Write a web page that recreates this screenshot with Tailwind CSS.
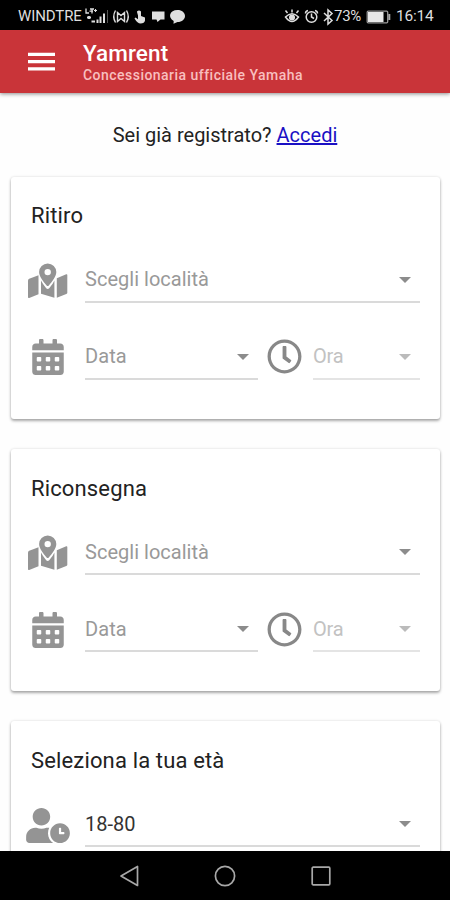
<!DOCTYPE html>
<html lang="it">
<head>
<meta charset="utf-8">
<title>Yamrent</title>
<script src="https://cdn.jsdelivr.net/npm/@tailwindcss/browser@4"></script>
</head>
<body class="font-['Roboto',sans-serif] bg-[#fefefe]">
<svg class="hidden">
  <symbol id="map" viewBox="0 0 40 36">
    <path d="M0 17.500Q0 16.200 1.200 15.700L10.500 12.300V31.200L1.200 34.900Q0 35.300 0 34.200Z"/>
    <path d="M13 17.500Q15 21.500 18.200 25.200Q19.700 26.600 21.200 25.200Q25 21 26.400 17.500V34.800L13 30.800Z"/>
    <path d="M28.800 15.200 38.200 11.300Q39.300 11 39.300 12V29.500Q39.300 30.500 38.300 31L28.800 34.800Z"/>
    <path fill-rule="evenodd" d="M19.700 0.500A8.600 8.600 0 0 0 11.100 9.100C11.100 13.500 15.500 19 18.600 22.500Q19.700 23.600 20.800 22.500C24 19 28.300 13.500 28.300 9.100A8.600 8.600 0 0 0 19.700 .5ZM19.700 5.900A3.200 3.200 0 1 1 19.700 12.300A3.200 3.200 0 0 1 19.700 5.900Z"/>
  </symbol>
  <symbol id="calendar" viewBox="0 0 448 512">
    <path d="M0 464c0 26.500 21.500 48 48 48h352c26.500 0 48-21.500 48-48V192H0v272zm320-196c0-6.600 5.400-12 12-12h40c6.600 0 12 5.400 12 12v40c0 6.600-5.400 12-12 12h-40c-6.600 0-12-5.400-12-12v-40zm0 128c0-6.600 5.400-12 12-12h40c6.600 0 12 5.400 12 12v40c0 6.600-5.400 12-12 12h-40c-6.600 0-12-5.400-12-12v-40zM192 268c0-6.600 5.400-12 12-12h40c6.600 0 12 5.400 12 12v40c0 6.600-5.400 12-12 12h-40c-6.600 0-12-5.400-12-12v-40zm0 128c0-6.600 5.400-12 12-12h40c6.600 0 12 5.400 12 12v40c0 6.600-5.400 12-12 12h-40c-6.600 0-12-5.400-12-12v-40zM64 268c0-6.600 5.400-12 12-12h40c6.600 0 12 5.400 12 12v40c0 6.600-5.400 12-12 12H76c-6.600 0-12-5.400-12-12v-40zm0 128c0-6.600 5.400-12 12-12h40c6.600 0 12 5.400 12 12v40c0 6.600-5.400 12-12 12H76c-6.600 0-12-5.400-12-12v-40zM400 64h-48V16c0-8.800-7.200-16-16-16h-32c-8.800 0-16 7.200-16 16v48H160V16c0-8.800-7.200-16-16-16h-32c-8.800 0-16 7.200-16 16v48H48C21.500 64 0 85.500 0 112v48h448v-48c0-26.500-21.500-48-48-48z"/>
  </symbol>
  <symbol id="clock" viewBox="0 0 512 512">
    <path d="M256 8C119 8 8 119 8 256s111 248 248 248 248-111 248-248S393 8 256 8zm0 448c-110.500 0-200-89.500-200-200S145.500 56 256 56s200 89.500 200 200-89.500 200-200 200zm61.800-104.400l-84.900-61.700c-3.100-2.300-4.900-5.900-4.900-9.700V116c0-6.600 5.400-12 12-12h32c6.600 0 12 5.400 12 12v141.700l66.800 48.600c5.400 3.900 6.500 11.400 2.600 16.800L334.600 349c-3.900 5.300-11.400 6.500-16.800 2.600z"/>
  </symbol>
  <symbol id="userclock" viewBox="0 0 640 512">
    <path d="M496 224c-79.600 0-144 64.400-144 144s64.400 144 144 144 144-64.400 144-144-64.400-144-144-144zm64 150.300c0 5.300-4.400 9.700-9.700 9.700h-60.600c-5.300 0-9.700-4.400-9.700-9.700v-76.600c0-5.300 4.400-9.700 9.700-9.700h12.600c5.300 0 9.700 4.400 9.700 9.700V352h38.300c5.300 0 9.700 4.400 9.700 9.700v12.600zM320 368c0-27.800 6.700-54.100 18.200-77.500-8-1.500-16.200-2.500-24.600-2.500h-16.700c-22.200 10.200-46.900 16-72.900 16s-50.600-5.800-72.900-16h-16.700C60.200 288 0 348.200 0 422.400V464c0 26.500 21.500 48 48 48h347.100c-45.300-31.900-75.100-84.500-75.100-144zm-96-112c70.700 0 128-57.300 128-128S294.700 0 224 0 96 57.300 96 128s57.300 128 128 128z"/>
  </symbol>
</svg>
<div class="w-[450px] h-[900px] flex flex-col overflow-hidden">
  <div class="h-[30px] shrink-0 bg-black text-[#dedede] flex items-center pl-[18px] pr-[17px] pt-[3px] relative z-20">
    <span class="text-[15px] tracking-[-0.1px] w-[66px] whitespace-nowrap">WINDTRE</span>
    <svg class="w-[26px] h-[20px]" viewBox="84 6 26 20" fill="none" stroke="#dedede">
      <path d="M86 7.500V12H89M90 8H94M92 8V12.500M89.500 10.200H93" stroke-width="1.300"/><path d="M95.500 8V11M94 9.500H97" stroke-width="1.100"/>
      <path d="M87 16.500H91M89 15V18M91.500 20.500H95" stroke-width="1.800"/>
      <path d="M97.500 22V18.500M100.500 22V15.500M104 22V12.500" stroke-width="2"/><path d="M107.500 22V9" stroke="#555" stroke-width="1"/>
    </svg>
    <svg class="w-[76px] h-[20px] ml-[1px]" viewBox="111 6 76 20">
      <g fill="none" stroke="#dedede" stroke-width="1.400"><path d="M115.500 9.500Q112 15.500 115.500 21.500M126.500 9.500Q130 15.500 126.500 21.500M117.500 20.500V11.500L121 14.500L124.500 11.500V20.500L121 17.500Z"/></g>
      <g fill="#dedede"><path d="M137 14.500V10.500Q139 8.500 141 10.500V15L145 16.500V19.500Q144.500 22.500 140.500 22.500Q137.500 22.500 134.500 17.500L135.500 16.500L138 18.200V11Z"/><path d="M152 10.500H164.500V18.500H160.500L157.500 21L156.500 18.500H152Z"/><path d="M177.500 9C182 9 185 11.700 185 15S182 21 177.500 21L173.500 22.800L173.700 20C167.500 16.500 169.500 9 177.500 9Z"/></g>
    </svg>
    <svg class="w-[50px] h-[22px] ml-auto" viewBox="284 5 50 22" fill="none" stroke="#dedede" stroke-width="1.500">
      <path d="M285.500 16Q292 9.500 298.500 16Q292 25 285.500 16ZM287.500 12L285.500 9.500M292 11.500V8.500M296.500 12L298.500 9.500"/><circle cx="292" cy="16.500" r="2.300" fill="#dedede"/>
      <circle cx="311.500" cy="16" r="5.300"/><path d="M311.500 12.500V16L314 17.500M305.500 12.500Q305.500 10 308 9.500M317.500 12.500Q317.500 10 315 9.500"/>
      <path d="M324 12L332 19.500L328 23V9L332 12.500L324 20"/>
    </svg>
    <span class="text-[15px] w-[32px] whitespace-nowrap tracking-[-0.3px]">73%</span>
    <svg class="w-[25px] h-[14px]" viewBox="0 0 25 14"><rect x="1.200" y="1.200" width="20.500" height="11.600" rx="1" fill="none" stroke="#999" stroke-width="1.300"/><rect x="2" y="2" width="15.500" height="10" fill="#e8e8e8"/><path d="M23.300 4V10" stroke="#aaa" stroke-width="2"/></svg>
    <span class="text-[15.500px] ml-[5px] w-[37px] whitespace-nowrap tracking-[-0.200px]">16:14</span>
  </div>
  <header class="h-[63px] shrink-0 bg-[#c93439] flex items-start relative z-10 shadow-[0_1px_4px_rgba(0,0,0,0.45)]">
    <svg class="w-[27px] h-[19px] ml-[28px] mt-[22px]" viewBox="0 0 27 19" fill="#fff"><path d="M0 .7H27V4H0ZM0 8H27V11.300H0ZM0 15.300H27V18.600H0Z"/></svg>
    <div class="ml-[28px] pt-[10px]">
      <h1 class="text-[22.500px] leading-[26px] tracking-[0.1px] font-medium text-white">Yamrent</h1>
      <p class="text-[14px] leading-[18px] tracking-[0.47px] whitespace-nowrap text-[#f8bfbf] font-medium">Concessionaria ufficiale Yamaha</p>
    </div>
  </header>
  <main class="h-[758px] shrink-0 overflow-hidden px-[11px] flex flex-col">
    <p class="h-[84px] shrink-0 pt-[30px] text-center text-[20px] leading-[24px] text-[#222]"><span>Sei già registrato?</span> <a class="underline text-[#1a10c4]">Accedi</a></p>
    <div class="flex flex-col gap-[30px]">
      <section class="h-[242px] w-[429px] rounded-[3px] bg-white shadow-[0_2px_3px_rgba(0,0,0,0.32),0_0_3px_rgba(0,0,0,0.12)] pl-[17px] pr-[20px] pt-[26px]">
        <h2 class="pl-[3px] text-[22px] leading-[26px] tracking-[0.15px] text-[#222]">Ritiro</h2>
        <div class="flex mt-[24px] h-[50px] items-center">
          <svg class="w-[40px] h-[36px] mt-[5px] text-[#949494] fill-current"><use href="#map"/></svg>
          <div class="ml-[17px] w-[335px] h-[50px] border-b-2 border-[#dadada] flex items-center justify-between pr-[9px] pt-[4px]"><span class="text-[20px] tracking-[0.02px] text-[#999]">Scegli località</span><svg class="w-[12px] h-[6px] mt-[2px]" viewBox="0 0 12 6" fill="#8c8c8c"><path d="M0 0H12L6 6Z"/></svg></div>
        </div>
        <div class="flex mt-[27px] h-[50px] items-center">
          <svg class="w-[32px] h-[36px] ml-[4px] mt-[4px] text-[#949494] fill-current"><use href="#calendar"/></svg>
          <div class="ml-[21px] w-[173px] h-[50px] border-b-2 border-[#dadada] flex items-center justify-between pr-[9px] pt-[4px]"><span class="text-[20px] tracking-[0.1px] text-[#999]">Data</span><svg class="w-[12px] h-[6px] mt-[1px]" viewBox="0 0 12 6" fill="#8c8c8c"><path d="M0 0H12L6 6Z"/></svg></div>
          <svg class="w-[35px] h-[35px] ml-[9px] mt-[3px] text-[#888] fill-current"><use href="#clock"/></svg>
          <div class="ml-[11px] w-[107px] h-[50px] border-b-2 border-[#e4e4e4] flex items-center justify-between pr-[9px] pt-[4px]"><span class="text-[20px] tracking-[-0.2px] text-[#c2c2c2]">Ora</span><svg class="w-[12px] h-[6px] mt-[1px]" viewBox="0 0 12 6" fill="#bbb"><path d="M0 0H12L6 6Z"/></svg></div>
        </div>
      </section>
      <section class="h-[242px] w-[429px] rounded-[3px] bg-white shadow-[0_2px_3px_rgba(0,0,0,0.32),0_0_3px_rgba(0,0,0,0.12)] pl-[17px] pr-[20px] pt-[27px]">
        <h2 class="pl-[3px] text-[22px] leading-[26px] tracking-[0.15px] text-[#222]">Riconsegna</h2>
        <div class="flex mt-[23px] h-[50px] items-center">
          <svg class="w-[40px] h-[36px] mt-[6px] text-[#949494] fill-current"><use href="#map"/></svg>
          <div class="ml-[17px] w-[335px] h-[50px] border-b-2 border-[#dadada] flex items-center justify-between pr-[9px] pt-[5px]"><span class="text-[20px] tracking-[0.02px] text-[#999]">Scegli località</span><svg class="w-[12px] h-[6px] mt-[1px]" viewBox="0 0 12 6" fill="#8c8c8c"><path d="M0 0H12L6 6Z"/></svg></div>
        </div>
        <div class="flex mt-[27px] h-[50px] items-center">
          <svg class="w-[32px] h-[36px] ml-[4px] mt-[5px] text-[#949494] fill-current"><use href="#calendar"/></svg>
          <div class="ml-[21px] w-[173px] h-[50px] border-b-2 border-[#dadada] flex items-center justify-between pr-[9px] pt-[5px]"><span class="text-[20px] tracking-[0.1px] text-[#999]">Data</span><svg class="w-[12px] h-[6px] mt-[1px]" viewBox="0 0 12 6" fill="#8c8c8c"><path d="M0 0H12L6 6Z"/></svg></div>
          <svg class="w-[35px] h-[35px] ml-[9px] mt-[4px] text-[#888] fill-current"><use href="#clock"/></svg>
          <div class="ml-[11px] w-[107px] h-[50px] border-b-2 border-[#e4e4e4] flex items-center justify-between pr-[9px] pt-[5px]"><span class="text-[20px] tracking-[-0.2px] text-[#c2c2c2]">Ora</span><svg class="w-[12px] h-[6px] mt-[1px]" viewBox="0 0 12 6" fill="#bbb"><path d="M0 0H12L6 6Z"/></svg></div>
        </div>
      </section>
      <section class="h-[242px] w-[429px] rounded-[3px] bg-white shadow-[0_2px_3px_rgba(0,0,0,0.32),0_0_3px_rgba(0,0,0,0.12)] pl-[15px] pr-[20px] pt-[27px]">
        <h2 class="pl-[5px] text-[22px] leading-[26px] tracking-[0.15px] text-[#222]">Seleziona la tua età</h2>
        <div class="flex mt-[23px] h-[50px] items-center">
          <svg class="w-[44px] h-[35px] mt-[6px] text-[#949494] fill-current"><use href="#userclock"/></svg>
          <div class="ml-[15px] w-[335px] h-[50px] border-b-2 border-[#dadada] flex items-center justify-between pr-[9px] pt-[6px]"><span class="text-[20px] text-[#333]">18-80</span><svg class="w-[12px] h-[6px]" viewBox="0 0 12 6" fill="#8c8c8c"><path d="M0 0H12L6 6Z"/></svg></div>
        </div>
      </section>
    </div>
  </main>
  <nav class="h-[49px] shrink-0 bg-black flex items-center">
    <svg class="w-[20px] h-[22px] ml-[119px]" viewBox="0 0 20 22" fill="none" stroke="#a8a8a8" stroke-width="1.700" stroke-linejoin="round"><path d="M18.500 1.500V20.500L2 11Z"/></svg>
    <svg class="w-[22px] h-[22px] ml-[75px]" viewBox="0 0 22 22" fill="none" stroke="#a8a8a8" stroke-width="1.700"><circle cx="11" cy="11" r="9.600"/></svg>
    <svg class="w-[20px] h-[20px] ml-[75px]" viewBox="0 0 20 20" fill="none" stroke="#a8a8a8" stroke-width="1.700"><rect x="1.200" y="1.200" width="17.600" height="17.600" rx="1"/></svg>
  </nav>
</div>
</body>
</html>
